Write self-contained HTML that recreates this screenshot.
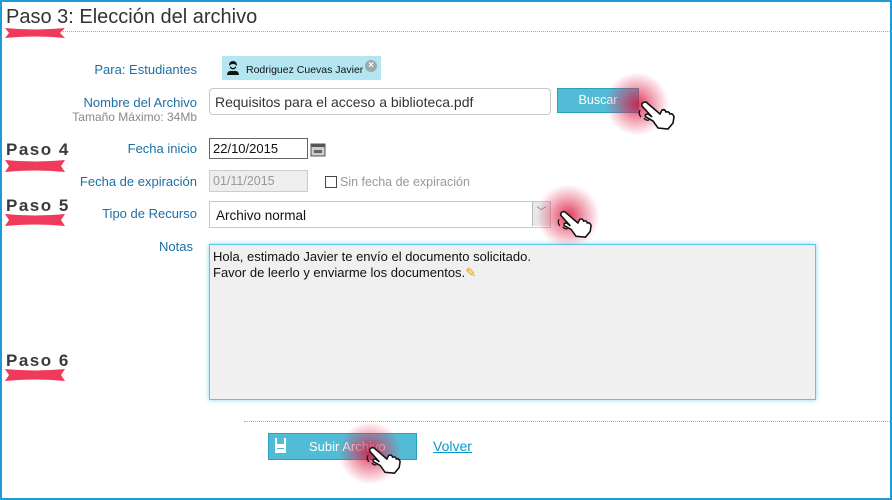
<!DOCTYPE html>
<html><head><meta charset="utf-8"><style>
*{margin:0;padding:0;box-sizing:border-box}
body{width:892px;height:500px;overflow:hidden;background:#fff;font-family:"Liberation Sans",sans-serif;position:relative}
.frame{position:absolute;left:0;top:0;width:892px;height:500px;border:2px solid #1e9ad6;border-right-width:2px}
.abs{position:absolute}
.lbl{position:absolute;right:695px;color:#1c6fa4;font-size:13px;white-space:nowrap;text-align:right}
.paso{position:absolute;left:6px;font-size:17px;font-weight:bold;color:#3a3a3a;letter-spacing:1.5px;font-family:"Liberation Sans",sans-serif}
.rib{position:absolute;left:5px;width:60px;height:13px}
.glow{position:absolute;width:64px;height:64px;border-radius:50%;background:radial-gradient(circle,rgba(215,20,60,.85) 0%,rgba(225,40,80,.45) 35%,rgba(255,255,255,0) 70%)}
</style></head><body>
<div class="frame"></div>
<div class="abs" style="left:6px;top:6px;font-size:20px;color:#333">Paso 3: Elección del archivo</div>
<div class="abs" style="left:63px;top:31px;width:829px;border-top:1px dotted #aaa"></div>
<svg class="rib" style="top:26px" viewBox="0 0 60 13"><path d="M0 2 Q30 5 60 2 L55 7 L60 12 Q30 9 0 12 L4 7 Z" fill="#f03a5c"/></svg>

<div class="lbl" style="top:62px">Para: Estudiantes</div>
<div class="abs" style="left:222px;top:56px;width:159px;height:24px;background:#b3e6f1"></div>
<svg class="abs" style="left:226px;top:60px" width="14" height="16" viewBox="0 0 14 16"><path d="M3 6 Q3 1 7 1 Q11 1 11 6 L10 5 Q7 3 4 5Z M4 6 Q7 10 10 6 L10 8 Q7 11 4 8Z M1 15 Q1 10 7 11 Q13 10 13 15Z" fill="#111"/></svg>
<div class="abs" style="left:246px;top:64px;font-size:10.5px;color:#111">Rodriguez Cuevas Javier</div>
<div class="abs" style="left:365px;top:60px;width:12px;height:12px;border-radius:50%;background:#9aa;color:#fff;font-size:10px;line-height:12px;text-align:center;font-weight:bold">×</div>

<div class="lbl" style="top:95px">Nombre del Archivo</div>
<div class="lbl" style="top:110px;color:#888;font-size:12px">Tamaño Máximo: 34Mb</div>
<div class="abs" style="left:209px;top:88px;width:342px;height:27px;border:1px solid #c8c8c8;border-radius:4px;font-size:14px;color:#333;padding:5px 0 0 5px">Requisitos para el acceso a biblioteca.pdf</div>
<div class="abs" style="left:557px;top:88px;width:82px;height:25px;background:#52bcd6;border:1px solid #2aa0bf;color:#fff;font-size:12.5px;text-align:center;line-height:22px">Buscar</div>

<div class="paso" style="top:140px">Paso 4</div>
<svg class="rib" style="top:159px" viewBox="0 0 60 13"><path d="M0 1 Q30 4 60 1 L56 7 L60 13 Q30 10 0 13 L4 7 Z" fill="#f03a5c"/></svg>
<div class="lbl" style="top:141px">Fecha inicio</div>
<div class="abs" style="left:209px;top:138px;width:99px;height:21px;border:1px solid #666;font-size:13px;color:#111;padding:2px 0 0 3px">22/10/2015</div>
<svg class="abs" style="left:310px;top:142px" width="16" height="15" viewBox="0 0 16 15"><rect x="1" y="2" width="14" height="12" fill="#ccc" stroke="#555"/><rect x="1" y="2" width="14" height="3" fill="#555"/><rect x="4" y="8" width="8" height="3" fill="#666"/></svg>

<div class="lbl" style="top:174px">Fecha de expiración</div>
<div class="abs" style="left:209px;top:170px;width:99px;height:22px;border:1px solid #ccc;background:#eee;font-size:12.5px;color:#999;padding:3px 0 0 3px">01/11/2015</div>
<div class="abs" style="left:325px;top:176px;width:12px;height:12px;border:1px solid #444;background:#fff"></div>
<div class="abs" style="left:340px;top:175px;font-size:12.5px;color:#999">Sin fecha de expiración</div>

<div class="paso" style="top:196px">Paso 5</div>
<svg class="rib" style="top:213px" viewBox="0 0 60 13"><path d="M0 1 Q30 4 60 1 L56 7 L60 13 Q30 10 0 13 L4 7 Z" fill="#f03a5c"/></svg>
<div class="lbl" style="top:206px">Tipo de Recurso</div>
<div class="abs" style="left:209px;top:201px;width:342px;height:27px;border:1px solid #c8c8c8;font-size:13.5px;color:#111;padding:6px 0 0 6px">Archivo normal</div>
<div class="abs" style="left:532px;top:202px;width:18px;height:24px;background:#e8e8e8;border-left:1px solid #bbb;color:#777;font-size:10px;text-align:center;line-height:22px">﹀</div>

<div class="lbl" style="top:239px;right:699px">Notas</div>
<div class="abs" style="left:209px;top:244px;width:607px;height:156px;border:1px solid #5bc6e8;box-shadow:0 0 5px #8ad7f0;background:#f0f0f0;font-size:13px;color:#111;padding:4px 0 0 3px;line-height:16px">Hola, estimado Javier te envío el documento solicitado.<br>Favor de leerlo y enviarme los documentos.<span style="color:#e8a000">✎</span></div>

<div class="paso" style="top:351px">Paso 6</div>
<svg class="rib" style="top:368px" viewBox="0 0 60 13"><path d="M0 1 Q30 4 60 1 L56 7 L60 13 Q30 10 0 13 L4 7 Z" fill="#f03a5c"/></svg>

<div class="abs" style="left:244px;top:421px;width:648px;border-top:1px dotted #aaa"></div>
<div class="abs" style="left:268px;top:433px;width:149px;height:27px;background:#52bcd6;border:1px solid #2aa0bf;color:#fff;font-size:13px;line-height:25px;padding-left:40px">Subir Archivo</div>
<svg class="abs" style="left:275px;top:438px" width="11" height="15" viewBox="0 0 11 15"><rect x="0" y="0" width="11" height="15" fill="#fff"/><rect x="2" y="0" width="7" height="6" fill="#52bcd6"/><rect x="2" y="10" width="7" height="1" fill="#52bcd6"/></svg>
<div class="abs" style="left:433px;top:438px;font-size:14px;color:#0a98c8;text-decoration:underline">Volver</div>

<div class="glow" style="left:605px;top:72px"></div>
<div class="glow" style="left:536px;top:184px"></div>
<div class="glow" style="left:338px;top:421px"></div>
<svg class="abs" style="left:638px;top:96px" width="40" height="36" viewBox="0 0 40 36"><path d="M8 6 L22 18 L24 14 Q27 13 28 16 Q31 15 32 18 Q35 17 36 21 L35 27 L30 33 L20 32 L15 25 L8 21 Q6 18 10 18 L14 21 L4 10 Q3 6 8 6Z" fill="#fff" stroke="#111" stroke-width="1.6"/><path d="M2 14 Q0 18 3 21 M6 22 Q8 25 11 24" stroke="#111" fill="none" stroke-width="1.3"/></svg>
<svg class="abs" style="left:556px;top:206px" width="40" height="34" viewBox="0 0 40 36"><path d="M8 6 L22 18 L24 14 Q27 13 28 16 Q31 15 32 18 Q35 17 36 21 L35 27 L30 33 L20 32 L15 25 L8 21 Q6 18 10 18 L14 21 L4 10 Q3 6 8 6Z" fill="#fff" stroke="#111" stroke-width="1.6"/><path d="M2 14 Q0 18 3 21 M6 22 Q8 25 11 24" stroke="#111" fill="none" stroke-width="1.3"/></svg>
<svg class="abs" style="left:365px;top:442px" width="40" height="34" viewBox="0 0 40 36"><path d="M8 6 L22 18 L24 14 Q27 13 28 16 Q31 15 32 18 Q35 17 36 21 L35 27 L30 33 L20 32 L15 25 L8 21 Q6 18 10 18 L14 21 L4 10 Q3 6 8 6Z" fill="#fff" stroke="#111" stroke-width="1.6"/><path d="M2 14 Q0 18 3 21 M6 22 Q8 25 11 24" stroke="#111" fill="none" stroke-width="1.3"/></svg>
</body></html>
